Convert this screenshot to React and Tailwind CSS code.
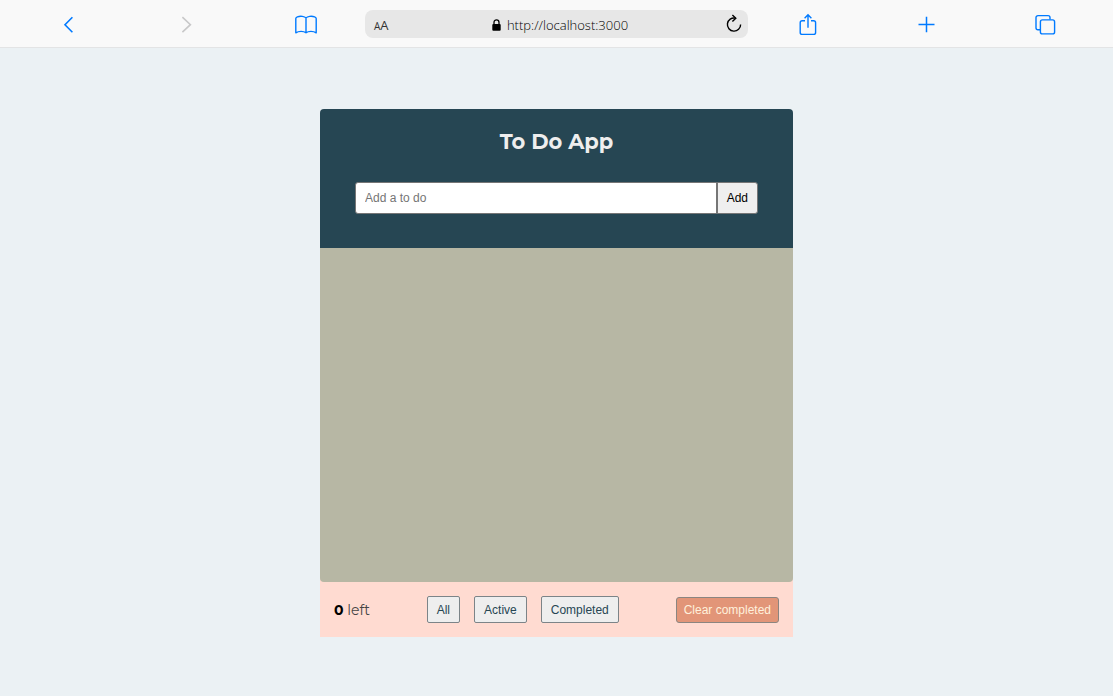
import { useState } from 'react';

const toolButton = 'flex h-8 w-8 items-center justify-center justify-self-center text-[#007aff]';
const filterButton =
  'h-[27px] rounded-xs border border-[#7c8488] bg-[#eeeeee] px-[9px] text-xs text-[#264653]';

function Icon({ children }) {
  return (
    <svg width="24" height="24" viewBox="0 0 24 24" fill="none" stroke="currentColor" strokeWidth="1.4" aria-hidden="true">
      {children}
    </svg>
  );
}

function Toolbar() {
  return (
    <nav className="grid h-12 grid-cols-[1fr_1fr_1fr_383px_1fr_1fr_1fr] items-center border-b border-[#e3e4e5] bg-[#f9f9f9] px-2">
      <button type="button" aria-label="Back" className={toolButton}>
        <Icon><path d="M16.4 5.2 9 12.7 16.4 20.2" strokeWidth="1.6" /></Icon>
      </button>
      <button type="button" aria-label="Forward" disabled className="flex h-8 w-8 items-center justify-center justify-self-center text-[#c8c8c9]">
        <Icon><path d="M7.4 5.2 15.4 12.7 7.4 20.2" strokeWidth="1.6" /></Icon>
      </button>
      <button type="button" aria-label="Bookmarks" className={toolButton}>
        <Icon>
          <path d="M12 5.9C10.6 4.3 6.4 3.7 3.4 4.8C2.3 5.2 1.8 5.8 1.8 6.6V20.8C4.6 18.9 9.6 18.9 12 20.8C14.4 18.9 19.4 18.9 22.2 20.8V6.6C22.2 5.8 21.7 5.2 20.6 4.8C17.6 3.7 13.4 4.3 12 5.9V20.8" strokeLinejoin="round" />
        </Icon>
      </button>
      <div className="grid h-7 grid-cols-[1fr_auto_1fr] items-center rounded-lg bg-[#e7e7e7] pr-[6px] pl-[9px] font-['Open_Sans',sans-serif] font-light text-black">
        <button type="button" aria-label="Text size" className="flex items-baseline justify-self-start pt-1 font-normal text-[#333333]">
          <span className="text-[10px] leading-4">A</span>
          <span className="text-[13px] leading-4">A</span>
        </button>
        <div className="flex items-center gap-[6px] pt-[2px] pl-1 text-[13px] leading-4">
          <svg width="9" height="12" viewBox="0 0 9 12" aria-hidden="true">
            <rect x="0.3" y="5" width="8.4" height="6.8" rx="1" fill="#000" />
            <path d="M2 5.4V3.4C2 .1 7 .1 7 3.4V5.4" fill="none" stroke="#000" strokeWidth="1.3" />
          </svg>
          <span>http://localhost:3000</span>
        </div>
        <button type="button" aria-label="Reload" className="justify-self-end text-black">
          <svg width="16" height="20" viewBox="0 0 16 20" fill="none" stroke="currentColor" strokeWidth="1.4" aria-hidden="true">
            <path d="M14.6 10.4A6.6 6.6 0 1 1 9.4 4.1" />
            <path d="M6.4 1 9.8 4.2 6.4 7.6" />
          </svg>
        </button>
      </div>
      <button type="button" aria-label="Share" className={toolButton}>
        <Icon>
          <path d="M9 8.7H6.2A2 2 0 0 0 4.2 10.7V20.4A2 2 0 0 0 6.2 22.4H17.6A2 2 0 0 0 19.6 20.4V10.7A2 2 0 0 0 17.6 8.7H15" />
          <path d="M12 15.7V3M8.6 6.2 12 2.8 15.4 6.2" />
        </Icon>
      </button>
      <button type="button" aria-label="New tab" className={toolButton}>
        <Icon><path d="M11.5 4.8V20.2M3.5 12.5H19.5" strokeWidth="1.5" /></Icon>
      </button>
      <button type="button" aria-label="Show tabs" className={toolButton}>
        <Icon>
          <path d="M6.4 17.8H4A2 2 0 0 1 2 15.8V5.6A2 2 0 0 1 4 3.6H14A2 2 0 0 1 16 5.6V7.6" />
          <rect x="6.4" y="7.9" width="14.2" height="14" rx="2" />
        </Icon>
      </button>
    </nav>
  );
}

export default function App() {
  const [text, setText] = useState('');

  return (
    <div className="min-h-screen bg-[#ebf1f4] font-['Liberation_Sans',Arial,sans-serif]">
      <Toolbar />
      <main className="mx-auto mt-[61px] max-w-[473px]">
        <header className="rounded-t bg-[#264653] px-[35px] pt-[19px] pb-[34px]">
          <h1 className="text-center font-['Montserrat','Inter',sans-serif] text-[21px] leading-7 font-bold text-[#eeeeee]">
            To Do App
          </h1>
          <form className="mt-[26px] flex h-8" onSubmit={(e) => { e.preventDefault(); setText(''); }}>
            <input
              type="text"
              aria-label="Add a to do"
              placeholder="Add a to do"
              value={text}
              onChange={(e) => setText(e.target.value)}
              className="min-w-0 flex-1 rounded-l-[3px] border border-[#767676] bg-white px-[9px] text-xs text-black placeholder:text-[#757575]"
            />
            <button type="submit" className="rounded-r-[3px] border border-[#767676] bg-[#efefef] px-[9px] text-xs text-black">
              Add
            </button>
          </form>
        </header>
        <section className="bg-[#ffdbd1]">
          <ul aria-label="To do items" className="min-h-[334px] rounded-b bg-[#b7b7a4]" />
          <footer className="flex items-center justify-between px-[14px] py-[14px]">
            <p className="font-['Montserrat','Inter',sans-serif] text-sm leading-5 text-[#444444]">
              <strong className="font-bold text-black">0</strong> left
            </p>
            <div className="flex gap-[14px]">
              <button type="button" className={filterButton}>All</button>
              <button type="button" className={filterButton}>Active</button>
              <button type="button" className={filterButton}>Completed</button>
            </div>
            <button type="button" className="h-[26px] rounded-[3px] border border-[#8b8580] bg-[#e29578] px-[7px] text-xs text-[#fff1dc]">
              Clear completed
            </button>
          </footer>
        </section>
      </main>
    </div>
  );
}
